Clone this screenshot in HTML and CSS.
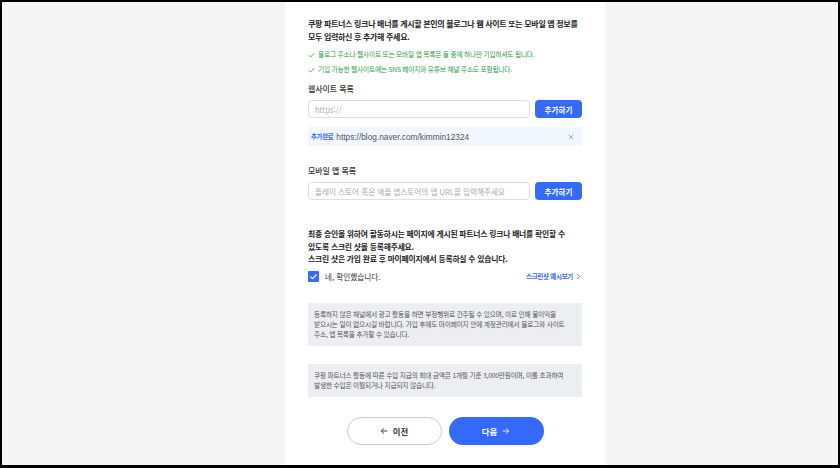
FILE: index.html
```html
<!DOCTYPE html>
<html lang="ko">
<head>
<meta charset="utf-8">
<link rel="stylesheet" href="styles.css">
</head>
<body>
<div class="frame">
  <main class="panel">
    <p class="lead">쿠팡 파트너스 링크나 배너를 게시할 본인의 블로그나 웹 사이트 또는 모바일 앱 정보를 모두 입력하신 후 추가해 주세요.</p>
    <ul class="checks">
      <li><svg class="tick" viewBox="0 0 10 8"><path d="M1 4.2 L3.8 7 L9 1.2" fill="none" stroke="currentColor" stroke-width="1.1"/></svg>블로그 주소나 웹사이트 또는 모바일 앱 목록은 둘 중에 하나만 기입하셔도 됩니다.</li>
      <li><svg class="tick" viewBox="0 0 10 8"><path d="M1 4.2 L3.8 7 L9 1.2" fill="none" stroke="currentColor" stroke-width="1.1"/></svg>기입 가능한 웹사이트에는 SNS 페이지와 유튜브 채널 주소도 포함됩니다.</li>
    </ul>

    <section class="field">
      <div class="label">웹사이트 목록</div>
      <div class="row">
        <input class="input" type="text" placeholder="https://">
        <button class="add">추가하기</button>
      </div>
      <div class="done">
        <span class="done-tag">추가완료</span>
        <span class="done-url">https://blog.naver.com/kimmin12324</span>
        <svg class="close" viewBox="0 0 8 8"><path d="M1 1 L7 7 M7 1 L1 7" stroke="#8a8f99" stroke-width="1"/></svg>
      </div>
    </section>

    <section class="field field-app">
      <div class="label">모바일 앱 목록</div>
      <div class="row">
        <input class="input" type="text" placeholder="플레이 스토어 혹은 애플 앱스토어의 앱 URL을 입력해주세요">
        <button class="add">추가하기</button>
      </div>
    </section>

    <p class="notice">최종 승인을 위하여 활동하시는 페이지에 게시된 파트너스 링크나 배너를 확인할 수 있도록 스크린 샷을 등록해주세요.<br>스크린 샷은 가입 완료 후 마이페이지에서 등록하실 수 있습니다.</p>

    <div class="confirm">
      <label class="agree">
        <span class="box"><svg viewBox="0 0 12 12"><path d="M2.8 6.2 L5.1 8.4 L9.3 3.8" fill="none" stroke="#fff" stroke-width="1.3"/></svg></span>
        네, 확인했습니다.
      </label>
      <a class="example">스크린샷 예시보기 <svg viewBox="0 0 6 8"><path d="M1.5 1 L4.5 4 L1.5 7" fill="none" stroke="currentColor" stroke-width="1"/></svg></a>
    </div>

    <div class="info">등록하지 않은 채널에서 광고 활동을 하면 부정행위로 간주될 수 있으며, 이로 인해 불이익을 받으시는 일이 없으시길 바랍니다. 가입 후에도 마이페이지 안에 계정관리에서 블로그와 사이트 주소, 앱 목록을 추가할 수 있습니다.</div>
    <div class="info info-2">쿠팡 파트너스 활동에 따른 수입 지급의 최대 금액은 1개월 기준 3,000만원이며, 이를 초과하여 발생한 수입은 이월되거나 지급되지 않습니다.</div>

    <div class="nav">
      <button class="btn prev"><svg viewBox="0 0 10 10"><path d="M9 5 H1.5 M5 1.5 L1.5 5 L5 8.5" fill="none" stroke="currentColor" stroke-width="1.1"/></svg>이전</button>
      <button class="btn next">다음<svg viewBox="0 0 10 10"><path d="M1 5 H8.5 M5 1.5 L8.5 5 L5 8.5" fill="none" stroke="currentColor" stroke-width="1.1"/></svg></button>
    </div>
  </main>
</div>
</body>
</html>
```
FILE: styles.css
```css
* { box-sizing: border-box; }
html, body { margin: 0; padding: 0; }
body {
  font-family: "Noto Sans CJK KR", "Noto Sans", sans-serif;
  color: #222;
  word-break: keep-all;
}
.frame {
  width: 840px;
  height: 468px;
  border: 2px solid #000;
  border-bottom-width: 3px;
  background: #f5f5f5;
  overflow: hidden;
}
.panel {
  width: 320px;
  height: 100%;
  margin: 0 auto 0 283px;
  background: #fff;
  padding: 16px 23px 0 23px;
}
.lead {
  margin: 0;
  font-size: 8px;
  font-weight: 700;
  line-height: 12.5px;
  letter-spacing: -0.32px;
  color: #222;
}
.checks {
  list-style: none;
  margin: 4px 0 0 0;
  padding: 0;
  color: #2e9b45;
  font-size: 6.7px;
  line-height: 15px;
  letter-spacing: -0.2px;
}
.checks li { display: flex; align-items: center; }
.tick { width: 7px; height: 6px; margin-right: 3px; }
.field { margin-top: 6px; }
.label {
  font-size: 7.9px;
  font-weight: 500;
  color: #333;
  line-height: 12px;
  margin-bottom: 5px;
}
.row { display: flex; gap: 5px; }
.input {
  flex: 1;
  min-width: 0;
  height: 18px;
  border: 1px solid #dcdfe4;
  border-radius: 4px;
  padding: 0 6px;
  font-family: inherit;
  font-size: 7.6px;
  color: #333;
  outline: none;
}
.input::placeholder { color: #a6aab1; }
.add {
  width: 47px;
  height: 18px;
  border: 0;
  border-radius: 4px;
  background: #346aff;
  color: #fff;
  font-family: inherit;
  font-size: 7.6px;
  font-weight: 700;
  padding: 0;
}
.done {
  margin-top: 9px;
  height: 19px;
  background: #f2f6fe;
  display: flex;
  align-items: center;
  padding: 0 8px 0 3px;
}
.done-tag { font-size: 6.4px; font-weight: 700; color: #346aff; margin-right: 3px; letter-spacing: -0.3px; }
.done-url { font-family: "Liberation Sans", sans-serif; font-size: 8.3px; color: #555; flex: 1; }
.close { width: 6px; height: 6px; }
.field-app { margin-top: 19px; }
.notice {
  margin: 28px 0 0 0;
  font-size: 7.8px;
  font-weight: 700;
  line-height: 12.5px;
  letter-spacing: -0.2px;
  color: #222;
}
.confirm {
  margin-top: 5px;
  display: flex;
  align-items: center;
  justify-content: space-between;
}
.agree { display: flex; align-items: center; font-size: 7.6px; color: #333; }
.box {
  width: 11px; height: 11px;
  background: #346aff;
  border-radius: 1px;
  margin-right: 6px;
  display: flex;
}
.box svg { width: 11px; height: 11px; }
.example {
  display: flex; align-items: center;
  font-size: 6.4px; font-weight: 700; color: #346aff; letter-spacing: -0.2px;
  margin-right: 1px;
}
.example svg { width: 5px; height: 7px; margin-left: 3px; }
.info {
  margin-top: 21px;
  background: #eceef1;
  padding: 6px 6px 7px 6px;
  font-size: 6.7px;
  line-height: 10px;
  color: #555;
  letter-spacing: -0.2px;
}
.info-2 { margin-top: 18px; }
.nav {
  margin-top: 20px;
  display: flex;
  justify-content: center;
  gap: 7px;
}
.btn {
  width: 95px;
  height: 28px;
  border-radius: 14px;
  font-family: inherit;
  font-size: 8.4px;
  font-weight: 700;
  display: flex;
  align-items: center;
  justify-content: center;
  gap: 5px;
  padding: 0;
}
.btn svg { width: 8px; height: 8px; }
.prev { background: #fff; border: 1px solid #ccc; color: #333; }
.next { background: #346aff; border: 0; color: #fff; }
```
